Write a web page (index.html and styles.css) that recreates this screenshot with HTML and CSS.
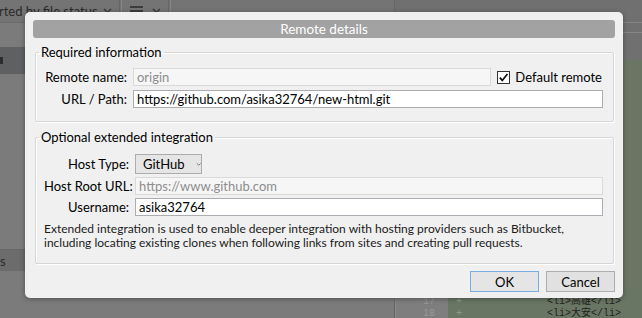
FILE: index.html
```html
<!DOCTYPE html>
<html>

<head>
    <title>Remote details</title>
    <link rel="stylesheet" href="styles.css">
</head>

<body>
    <div class="app">
        <div class="sidebar">
            <div class="toolbar">
                <span class="sort">rted by file status</span>
                <svg class="caret" width="9" height="6" viewBox="0 0 9 6"><path d="M1 1 L4.5 4.5 L8 1" fill="none" stroke="#333" stroke-width="1.2"/></svg>
                <span class="sep"></span>
                <svg class="menu" width="13" height="10" viewBox="0 0 13 10"><path d="M0 1 H13 M0 5 H13 M0 9 H13" stroke="#2a2a2a" stroke-width="1.3"/></svg>
                <svg class="caret" width="9" height="6" viewBox="0 0 9 6"><path d="M1 1 L4.5 4.5 L8 1" fill="none" stroke="#333" stroke-width="1.2"/></svg>
                <span class="sep"></span>
            </div>
            <div class="filelist">
                <div class="file selected"><span class="mark"></span></div>
                <div class="section">s</div>
            </div>
        </div>
        <div class="diff">
            <div class="diff-head">
                <div class="diff-title"></div>
                <div class="diff-sub"></div>
            </div>
            <div class="hunk">
                <div class="gutter">
                    <div class="num">17</div>
                    <div class="num">18</div>
                </div>
                <div class="code">
                    <div class="line"><span class="plus">+</span><span class="src">&lt;li&gt;高雄&lt;/li&gt;</span></div>
                    <div class="line"><span class="plus">+</span><span class="src">&lt;li&gt;大安&lt;/li&gt;</span></div>
                </div>
            </div>
        </div>
    </div>

    <div class="dialog">
        <div class="title">Remote details</div>

        <fieldset class="group">
            <legend>Required information</legend>
            <div class="form">
                <label>Remote name:</label>
                <div class="name-row">
                    <input class="field disabled" type="text" value="origin" disabled>
                    <span class="default">
                        <span class="check">
                            <svg width="11" height="11" viewBox="0 0 11 11">
                                <path d="M1.8 5.6 L4.3 8.4 L9.4 1.9" fill="none" stroke="#111" stroke-width="1.7"/>
                            </svg>
                        </span>
                        Default remote
                    </span>
                </div>
                <label>URL / Path:</label>
                <input class="field" type="text" value="https://github.com/asika32764/new-html.git">
            </div>
        </fieldset>

        <fieldset class="group second">
            <legend>Optional extended integration</legend>
            <div class="form wide">
                <label>Host Type:</label>
                <div class="select-row">
                    <span class="select">GitHub
                        <svg class="chev" width="7" height="5" viewBox="0 0 7 5"><path d="M1 1 L3.5 3.5 L6 1" fill="none" stroke="#666" stroke-width="1.1"/></svg>
                    </span>
                </div>
                <label>Host Root URL:</label>
                <input class="field disabled" type="text" value="https://www.github.com" disabled>
                <label>Username:</label>
                <input class="field" type="text" value="asika32764">
                <p class="note">Extended integration is used to enable deeper integration with hosting providers such as Bitbucket,<br>including locating existing clones when following links from sites and creating pull requests.</p>
            </div>
        </fieldset>

        <div class="actions">
            <button class="btn default-btn">OK</button>
            <button class="btn">Cancel</button>
        </div>
    </div>
</body>

</html>
```

FILE: styles.css
```css
* {
    box-sizing: border-box;
}

body {
    margin: 0;
    width: 642px;
    height: 318px;
    overflow: hidden;
    position: relative;
    background-color: #787878;
    font-family: "Lato", "Noto Sans", sans-serif;
}

/* app behind the dialog */

.app {
    display: flex;
    height: 318px;
}

.sidebar {
    width: 395px;
    display: flex;
    flex-direction: column;
    background-color: #7b7b7b;
    border-right: 1px solid #666666;
}

.toolbar {
    height: 23px;
    display: flex;
    align-items: center;
    background-color: #747474;
    border-bottom: 1px solid #6a6a6a;
    font-size: 13px;
    color: #2a2a2a;
    white-space: nowrap;
}

.sort {
    margin-left: -1px;
    width: 104px;
}

.caret {
    margin: 0 5px 0 0;
}

.menu {
    margin: 0 9px 0 6px;
}

.sep {
    width: 3px;
    height: 23px;
    border-left: 1px solid #666666;
    border-right: 1px solid #868686;
    margin: 0 2px;
}

.filelist {
    flex: 1;
    display: flex;
    flex-direction: column;
    padding-top: 24px;
}

.file {
    height: 27px;
}

.file.selected {
    background-color: #5f6061;
    display: flex;
    align-items: center;
}

.mark {
    width: 3px;
    height: 7px;
    background-color: #2c2c2c;
}

.section {
    margin-top: 175px;
    height: 22px;
    line-height: 22px;
    background-color: #6c6c6c;
    border-top: 1px solid #686868;
    font-size: 13px;
    color: #2a2a2a;
}

.diff {
    flex: 1;
    display: flex;
    flex-direction: column;
    background-color: #707070;
}

.diff-head {
    height: 60px;
}

.diff-title {
    height: 23px;
    border-bottom: 1px solid #858585;
}

.diff-sub {
    height: 10px;
    border-bottom: 1px solid #858585;
}

.hunk {
    flex: 1;
    display: flex;
    margin-bottom: -2px;
}

.gutter {
    width: 53px;
    display: flex;
    flex-direction: column;
    justify-content: flex-end;
    background-color: #7e7e7e;
    border-left: 1px solid #8a8a8a;
}

.code {
    flex: 1;
    display: flex;
    flex-direction: column;
    justify-content: flex-end;
    background-color: #6a7664;
}

.num,
.line {
    height: 12px;
    line-height: 12px;
    font-family: "Liberation Mono", "Noto Sans CJK TC", monospace;
    font-size: 10px;
}

.num {
    padding-left: 27px;
    color: #999999;
}

.line {
    display: flex;
}

.plus {
    width: 99px;
    padding-left: 8px;
    color: #8e9a88;
}

.src {
    color: #222222;
}

/* dialog */

.dialog {
    position: absolute;
    left: 25px;
    top: 12px;
    width: 598px;
    height: 286px;
    padding: 8px;
    background-color: #f0f0f0;
    border-radius: 5px;
    box-shadow: 0px 1px 5px rgba(0, 0, 0, 0.35);
    font-size: 13px;
    color: #000000;
}

.title {
    height: 18px;
    line-height: 18px;
    background-color: #a2a2a2;
    border-radius: 3px;
    color: #ffffff;
    text-align: center;
    font-size: 13.5px;
}

.group {
    margin: 6px 1px 0 2px;
    padding: 8px 10px 13px 8px;
    border: 1px solid #d6d6d6;
    border-radius: 2px;
    box-shadow: inset 1px 1px 0 #ffffff, 1px 1px 0 #ffffff;
}

.group.second {
    margin-top: 7px;
    padding-top: 8px;
}

legend {
    font-size: 13px;
    line-height: 16px;
    padding: 0 2px;
    margin-left: -5px;
}

.form {
    display: grid;
    grid-template-columns: 83px 1fr;
    column-gap: 6px;
    row-gap: 4px;
    align-items: center;
}

.form.wide {
    grid-template-columns: 85px 1fr;
    row-gap: 3px;
}

.form label {
    text-align: right;
    white-space: nowrap;
    line-height: 16px;
    font-size: 13px;
}

.field {
    height: 18px;
    width: 100%;
    padding: 0 3px;
    border: 1px solid #abadb3;
    background-color: #ffffff;
    font-family: "Lato", "Noto Sans", sans-serif;
    font-size: 13px;
    line-height: 16px;
    color: #000000;
    outline: none;
}

.field.disabled {
    background-color: #f6f6f6;
    border-color: #d9d9d9;
    color: #8d8d8d;
}

.name-row {
    display: flex;
    align-items: center;
    gap: 6px;
}

.name-row .field {
    flex: 1;
    width: auto;
}

.default {
    display: flex;
    align-items: center;
    gap: 5px;
    white-space: nowrap;
    padding-right: 1px;
    font-size: 13px;
}

.check {
    width: 13px;
    height: 13px;
    border: 1px solid #333333;
    background-color: #ffffff;
    display: flex;
    align-items: center;
    justify-content: center;
}

.select-row {
    display: flex;
    padding-top: 1px;
}

.select {
    width: 67px;
    height: 20px;
    line-height: 18px;
    padding-left: 7px;
    border: 1px solid #acacac;
    background-color: #e5e5e5;
    font-size: 13px;
    display: flex;
    align-items: center;
}

.chev {
    margin-left: 11px;
}

.note {
    grid-column: 1 / -1;
    margin: 3px 0 0 0;
    font-size: 12px;
    line-height: 14px;
    color: #1a1a1a;
    white-space: nowrap;
}

.actions {
    display: flex;
    justify-content: flex-end;
    gap: 7px;
    margin-top: 7px;
}

.btn {
    width: 69px;
    height: 21px;
    padding: 0;
    border: 1px solid #adadad;
    background-color: #e1e1e1;
    font-family: "Lato", "Noto Sans", sans-serif;
    font-size: 13px;
    color: #000000;
}

.default-btn {
    border-color: #7aaee3;
    background-color: #e5e5e5;
}
```
